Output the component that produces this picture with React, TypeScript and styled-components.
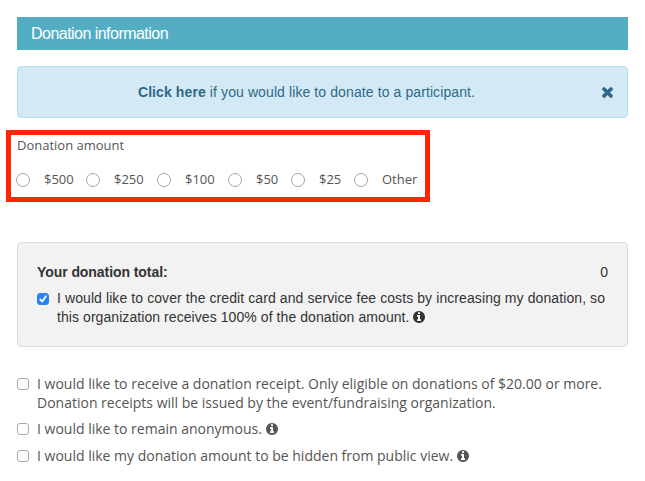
import React from 'react';
import styled, { createGlobalStyle } from 'styled-components';

const GlobalStyle = createGlobalStyle`
  *, *::before, *::after { box-sizing: border-box; }
  body {
    margin: 0;
    background: #fff;
    color: #555;
    font-family: "Open Sans", sans-serif;
    font-size: 14px;
    line-height: 19px;
  }
`;

const helvetica = '"Liberation Sans", Arial, sans-serif';

const Page = styled.main`
  width: 645px;
  height: 481px;
  padding: 17px 17px 0;
  overflow: hidden;
`;

const Heading = styled.h2`
  margin: 0 0 16px;
  height: 33px;
  padding-left: 14px;
  background: #53adc3;
  color: #fff;
  font: 400 16px/33px ${helvetica};
  letter-spacing: -0.53px;
`;

const Notice = styled.div`
  display: flex;
  align-items: center;
  height: 52px;
  padding: 0 14px 0 0;
  border: 1px solid #b2e2ec;
  border-radius: 4px;
  background: #d4e9f6;
  color: #2d6987;
  font-family: ${helvetica};
`;

const NoticeText = styled.p`
  flex: 1;
  margin: 0;
  padding-right: 7px;
  text-align: center;
  letter-spacing: 0.1px;
`;

const CloseButton = styled.button`
  display: flex;
  padding: 0;
  border: 0;
  background: none;
  color: inherit;
`;

const AmountGroup = styled.fieldset`
  width: 424px;
  height: 72px;
  margin: 12px 0 0 -11px;
  padding: 1px 0 0 6px;
  border: 5px solid #ff2600;
  font-size: 13px;
`;

const AmountTitle = styled.div`
  height: 34px;
`;

const Options = styled.div`
  display: flex;
`;

const Option = styled.label<{ $width: number }>`
  display: flex;
  align-items: center;
  gap: 14px;
  width: ${(p) => p.$width}px;
  height: 19px;
  white-space: nowrap;
`;

const Radio = styled.input`
  appearance: none;
  flex: none;
  width: 14px;
  height: 14px;
  margin: 1px 0 0 -1px;
  border: 1px solid #a3a3a3;
  border-radius: 50%;
  background: #fff;
`;

const TotalPanel = styled.section`
  height: 105px;
  margin-top: 40px;
  padding: 20px 19px 0;
  border: 1px solid #dcdcdc;
  border-radius: 4px;
  background: #f2f2f2;
  color: #333;
  font-family: ${helvetica};
`;

const TotalRow = styled.div`
  display: flex;
  justify-content: space-between;
  height: 26px;
`;

const TotalLabel = styled.strong`
  letter-spacing: -0.07px;
`;

const CheckRow = styled.label`
  display: flex;
  gap: 8px;
`;

const Checkbox = styled.span<{ $checked?: boolean }>`
  display: flex;
  align-items: center;
  justify-content: center;
  flex: none;
  width: 12px;
  height: 12px;
  margin-top: 4px;
  border: 1px solid ${(p) => (p.$checked ? '#2684f8' : '#aaa')};
  border-radius: 3px;
  background: ${(p) => (p.$checked ? '#2684f8' : '#fff')};
`;

const Line = styled.span<{ $spacing?: number }>`
  display: block;
  white-space: nowrap;
  letter-spacing: ${(p) => p.$spacing ?? 0}px;
`;

const Preferences = styled.section`
  display: flex;
  flex-direction: column;
  gap: 8px;
  margin-top: 27px;
`;

const ReceiptRow = styled(CheckRow)`
  height: 37px;
`;

const Icon = styled.svg`
  width: 12px;
  height: 12px;
  fill: currentColor;
  vertical-align: -1px;
`;

const CloseIcon = styled.svg`
  width: 11px;
  height: 11px;
  fill: currentColor;
`;

const InfoIcon = () => (
  <Icon viewBox="128 128 1536 1536" aria-hidden="true">
    <path d="M1152 1376v-160q0-14-9-23t-23-9h-96v-512q0-14-9-23t-23-9h-320q-14 0-23 9t-9 23v160q0 14 9 23t23 9h96v320h-96q-14 0-23 9t-9 23v160q0 14 9 23t23 9h448q14 0 23-9t9-23zm-128-896v-160q0-14-9-23t-23-9h-192q-14 0-23 9t-9 23v160q0 14 9 23t23 9h192q14 0 23-9t9-23zm640 416q0 209-103 385.5t-279.5 279.5-385.5 103-385.5-103-279.5-279.5-103-385.5 103-385.5 279.5-279.5 385.5-103 385.5 103 279.5 279.5 103 385.5z" />
  </Icon>
);

const amounts = [
  { label: '$500', width: 70 },
  { label: '$250', width: 71 },
  { label: '$100', width: 71 },
  { label: '$50', width: 63 },
  { label: '$25', width: 63 },
  { label: 'Other', width: 63 },
];

export default function App() {
  return (
    <Page>
      <GlobalStyle />
      <Heading>Donation information</Heading>
      <Notice>
        <NoticeText>
          <strong>Click here</strong> if you would like to donate to a participant.
        </NoticeText>
        <CloseButton aria-label="Close">
          <CloseIcon viewBox="110 366 1188 1188">
            <path d="M1298 1322q0 40-28 68l-136 136q-28 28-68 28t-68-28l-294-294-294 294q-28 28-68 28t-68-28l-136-136q-28-28-28-68t28-68l294-294-294-294q-28-28-28-68t28-68l136-136q28-28 68-28t68 28l294 294 294-294q28-28 68-28t68 28l136 136q28 28 28 68t-28 68l-294 294 294 294q28 28 28 68z" />
          </CloseIcon>
        </CloseButton>
      </Notice>
      <AmountGroup>
        <AmountTitle>Donation amount</AmountTitle>
        <Options>
          {amounts.map((a) => (
            <Option key={a.label} $width={a.width}>
              <Radio type="radio" name="amount" />
              {a.label}
            </Option>
          ))}
        </Options>
      </AmountGroup>
      <TotalPanel>
        <TotalRow>
          <TotalLabel>Your donation total:</TotalLabel>
          <span>0</span>
        </TotalRow>
        <CheckRow>
          <Checkbox $checked>
            <svg width="10" height="10" viewBox="0 0 10 10" fill="none" stroke="#fff" strokeWidth="1.7" strokeLinecap="round" strokeLinejoin="round">
              <path d="M2.2 5.4 4.2 7.6 7.9 2.2" />
            </svg>
          </Checkbox>
          <span>
            <Line $spacing={0.09}>I would like to cover the credit card and service fee costs by increasing my donation, so</Line>
            <Line $spacing={0.07}>
              this organization receives 100% of the donation amount. <InfoIcon />
            </Line>
          </span>
        </CheckRow>
      </TotalPanel>
      <Preferences>
        <ReceiptRow>
          <Checkbox />
          <span>
            <Line $spacing={0.005}>I would like to receive a donation receipt. Only eligible on donations of $20.00 or more.</Line>
            <Line>Donation receipts will be issued by the event/fundraising organization.</Line>
          </span>
        </ReceiptRow>
        <CheckRow>
          <Checkbox />
          <Line>
            I would like to remain anonymous. <InfoIcon />
          </Line>
        </CheckRow>
        <CheckRow>
          <Checkbox />
          <Line>
            I would like my donation amount to be hidden from public view. <InfoIcon />
          </Line>
        </CheckRow>
      </Preferences>
    </Page>
  );
}
